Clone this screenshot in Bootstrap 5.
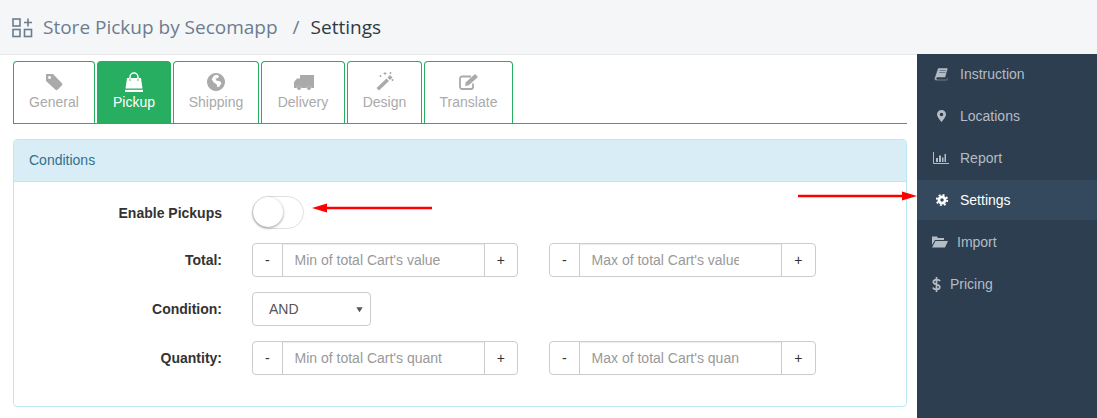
<!DOCTYPE html>
<html lang="en"><head><meta charset="utf-8"><title>Settings</title>
<link href="https://cdn.jsdelivr.net/npm/bootstrap@5.3.0/dist/css/bootstrap.min.css" rel="stylesheet">
<style>
html,body{height:418px;overflow:hidden}
body{font-family:"Liberation Sans",Arial,sans-serif;font-size:14px;color:#333;background:#fff;position:relative}
.topbar{height:55px;background:#f4f6f8;border-bottom:1px solid #e6e8ea;padding-left:12px;font-family:"Open Sans",sans-serif;font-size:19px;color:#6c7d8e}
.topbar svg{flex:none;margin-right:10px}
.crumb-sep{margin-left:15px}
.crumb-now{color:#2f3a45;margin-left:11px}
.shell{height:363px}
.content-area{width:917px;flex:none;padding:6px 10px 0 13px}
.sidebar{width:180px;flex:none;background:#2c3e50;margin-top:-1px;height:364px}
.sidelink{height:42px;color:#b6bcc3;font-size:14px;text-decoration:none;padding-left:16px}
.sidelink:first-child{margin-top:-1px}
.sidelink:hover{color:#b6bcc3}
.sidelink.on,.sidelink.on:hover{background:#34495e;color:#fff;height:40px;margin:1px 0}
.sideico{width:16px;margin-right:11px;flex:none}
.sideico svg{display:block}
.ico-import{margin-left:-1px;margin-right:9px}
.ico-price{margin-left:-1px;width:9px;margin-right:9px}
.tabstrip{border-bottom:1px solid #27ae60;gap:2px;height:63px;align-items:stretch}
.tabitem{border:1px solid #27ae60;border-bottom:0;border-radius:4px 4px 0 0;color:#aaa;padding:7px 0 0;font-size:14px;text-decoration:none;line-height:20px;text-align:center}
.tabitem:hover{color:#aaa}
.tabitem svg{display:block;margin:0 auto -1px}
.tabitem.on,.tabitem.on:hover{background:#27ae60;color:#fff}
.tw-gen{width:82px}.tw-pick{width:74px}.tw-ship{width:86px}.tw-del{width:84px}.tw-des{width:75px}.tw-tra{width:89px}
.condcard{margin-top:15px;height:268px;border-color:#bce8f1;border-radius:4px}
.condhead{height:42px;background:#d9edf7;color:#31708f;border-color:#bce8f1;padding:0 15px;font-size:14px;line-height:41px;border-radius:3px 3px 0 0!important}
.condbody{padding:14px 0 0}
.frow{display:flex;align-items:center;margin-bottom:15px}
.frow-toggle{margin-bottom:14px}
.frow-toggle .flabel{padding-top:1px}
.flabel{width:208px;text-align:right;font-weight:700;margin-right:30px;flex:none;color:#333}
.stepper{flex:none;height:34px;flex-wrap:nowrap;width:266px}
.stepper+.stepper{margin-left:31px;width:267px}
.stepper .btn{width:31px;padding:0;font-size:14px;color:#333;border-color:#ccc;background:#fff;line-height:32px;border-radius:4px 0 0 4px}
.stepper .btn:last-child{width:35px;border-radius:0 4px 4px 0}
.stepper+.stepper .btn:last-child{width:36px}
.stepper .form-control{padding:0 42px 0 12px;font-size:14px;border-color:#ccc;box-shadow:inset 0 1px 1px rgba(0,0,0,.075);text-overflow:clip;width:203px;flex:none;color:#555}
.stepper .form-control::placeholder{color:#999}
.picksel{width:119px;height:34px;padding:0 12px 0 16px;font-size:14px;color:#555;border-color:#ccc;border-radius:4px;background-size:9px 9px;background-position:right 6px center;background-image:url("data:image/svg+xml,%3Csvg xmlns='http://www.w3.org/2000/svg' viewBox='0 0 10 10'%3E%3Cpath d='M1.5 2.500h7L5 8z' fill='%23555'/%3E%3C/svg%3E")}
.toggletrack{width:52px;height:33px;border:1px solid #dfdfdf;border-radius:17px;background:#fff;position:relative}
.toggleknob{position:absolute;left:0;top:0;width:30px;height:30px;background:#fff;border-radius:50%;box-shadow:0 1px 3px rgba(0,0,0,.4)}
.redarrow{position:absolute;display:block}
.arrow-a{left:312px;top:203px}
.arrow-b{left:798px;top:191px}
</style></head><body>
<div class="topbar d-flex align-items-center">
<svg width="21" height="21" viewBox="0 0 21 21" fill="none" stroke="#6c7d8e" stroke-width="1.6"><rect x="1" y="2" width="7" height="7"/><rect x="1" y="12.500" width="7" height="7"/><rect x="12.500" y="12.500" width="7" height="7"/><path d="M16 1.500v8M12 5.500h8"/></svg>
<span>Store Pickup by Secomapp</span><span class="crumb-sep">/</span><span class="crumb-now">Settings</span>
</div>
<div class="shell d-flex">
<div class="content-area">
<div class="tabstrip d-flex">
<a class="tabitem tw-gen" href="#"><svg viewBox="0 0 24 24" width="24" height="24"><path d="M4 5h7l9 9.300a1.500 1.500 0 0 1 0 2l-4.500 4.400a1.500 1.500 0 0 1-2 0L4 12zM7.500 7a1.500 1.500 0 1 0 .01 0z" fill="#aaa" fill-rule="evenodd"/></svg>General</a>
<a class="tabitem tw-pick on" href="#"><svg viewBox="0 0 24 24" width="24" height="24"><path d="M5 9h14l1.500 10.500h-17z" fill="#fff"/><path d="M3 20.800h18V23H3z" fill="#fff"/><path d="M8 12V8a4 4 0 0 1 8 0v4" fill="none" stroke="#fff" stroke-width="1.500"/><path d="M8 9.500V12M16 9.500V12" stroke="#27ae60" stroke-width=".8"/></svg>Pickup</a>
<a class="tabitem tw-ship" href="#"><svg viewBox="0 0 24 24" width="24" height="24"><path d="M12 4a9 9 0 1 0 .01 0zM10 6.500l3-.8 2 1.300-1 2-2.500.8 1 2 3 .2 2 2-2 3.500-2 .8-1-3-3-2-1.800-3z" fill="#aaa" fill-rule="evenodd"/></svg>Shipping</a>
<a class="tabitem tw-del" href="#"><svg viewBox="0 0 24 24" width="24" height="24"><path d="M9 6h14v13h-2.300a3 3 0 0 0-5.400 0H10.700a3 3 0 0 0-5.400 0H3v-6l3-3.500h3z" fill="#aaa"/><circle cx="8" cy="19" r="2" fill="#aaa"/><circle cx="18" cy="19" r="2" fill="#aaa"/></svg>Delivery</a>
<a class="tabitem tw-des" href="#"><svg viewBox="0 0 24 24" width="24" height="24"><path d="M3.500 19l10-9.500 2.500 2.500-10 9.500z" fill="#aaa"/><path d="M14.500 8.500l2.500-2.500 2.500 2.500-2.500 2.500z" fill="#aaa"/><path d="M12 3v3M10.500 4.500h3M17.500 3v2M16.500 4h2M19.500 10v2M18.500 11h2M7.500 6v2M6.500 7h2" stroke="#aaa" stroke-width="1"/></svg>Design</a>
<a class="tabitem tw-tra" href="#"><svg viewBox="0 0 24 24" width="24" height="24"><path d="M16 14.500v3.500a2 2 0 0 1-2 2H5a2 2 0 0 1-2-2V9.500a2 2 0 0 1 2-2h9" fill="none" stroke="#aaa" stroke-width="1.800"/><path d="M8 17l.8-3.800L18 5l3 3-9.200 8.200z" fill="#aaa"/></svg>Translate</a>
</div>
<div class="card condcard">
<div class="card-header condhead">Conditions</div>
<div class="card-body condbody">
<div class="frow frow-toggle"><span class="flabel">Enable Pickups</span><div class="toggletrack"><div class="toggleknob"></div></div></div>
<div class="frow"><span class="flabel">Total:</span>
<div class="input-group stepper"><button class="btn" type="button">-</button><input class="form-control" placeholder="Min of total Cart's value"><button class="btn" type="button">+</button></div>
<div class="input-group stepper"><button class="btn" type="button">-</button><input class="form-control" placeholder="Max of total Cart's value"><button class="btn" type="button">+</button></div></div>
<div class="frow"><span class="flabel">Condition:</span><select class="form-select picksel"><option>AND</option></select></div>
<div class="frow"><span class="flabel">Quantity:</span>
<div class="input-group stepper"><button class="btn" type="button">-</button><input class="form-control" placeholder="Min of total Cart's quantity"><button class="btn" type="button">+</button></div>
<div class="input-group stepper"><button class="btn" type="button">-</button><input class="form-control" placeholder="Max of total Cart's quantity"><button class="btn" type="button">+</button></div></div>
</div></div>
</div>
<nav class="sidebar d-flex flex-column">
<a class="sidelink d-flex align-items-center" href="#"><span class="sideico"><svg width="16" height="14" viewBox="0 0 16 14"><path d="M5 1h10l-2.700 9.500H4.500a1 1 0 0 0 0 2h9.300l.6-1.800.6.400-.8 2.400H3.500A2 2 0 0 1 1.600 11zM6.500 3.500h6.500M6 5.500h6.500" fill="#b6bcc3" stroke="#2c3e50" stroke-width=".5"/></svg></span>Instruction</a>
<a class="sidelink d-flex align-items-center" href="#"><span class="sideico"><svg width="16" height="14" viewBox="0 0 16 14"><path d="M8.500 1A4.500 4.500 0 0 0 4 5.500C4 8 8.500 13 8.500 13S13 8 13 5.500A4.500 4.500 0 0 0 8.500 1zm0 6.300a1.800 1.800 0 1 1 0-3.600 1.800 1.800 0 0 1 0 3.600z" fill="#b6bcc3"/></svg></span>Locations</a>
<a class="sidelink d-flex align-items-center" href="#"><span class="sideico"><svg width="16" height="14" viewBox="0 0 16 14"><path d="M.5 1v11.500H16" fill="none" stroke="#b6bcc3"/><path d="M3 7h2v4H3zM6 4.500h2V11H6zM9 6.500h1.500V11H9zM11.500 3H13v8h-1.500z" fill="#b6bcc3"/></svg></span>Report</a>
<a class="sidelink on d-flex align-items-center" href="#"><span class="sideico"><svg width="16" height="14" viewBox="0 0 16 14" fill="none" stroke="#fff"><circle cx="9" cy="7" r="3.100" stroke-width="2.700"/><circle cx="9" cy="7" r="5.200" stroke-width="1.800" stroke-dasharray="2 2.080"/></svg></span>Settings</a>
<a class="sidelink d-flex align-items-center" href="#"><span class="sideico ico-import"><svg width="16" height="12" viewBox="0 0 16 12"><path d="M0 .5h5l1 1.500h6v2H3L0 9zM3.500 5H16l-3 6.500H0z" fill="#b6bcc3"/></svg></span>Import</a>
<a class="sidelink d-flex align-items-center" href="#"><span class="sideico ico-price"><svg width="9" height="15" viewBox="0 0 9 15"><path d="M8 4.200C7.500 3 6 2.700 4.500 2.700 3 2.700 1.300 3.300 1.300 5c0 3.500 6.500 1.500 6.500 5 0 1.700-1.600 2.400-3.300 2.400S1.400 11.800 1 10.500M4.500 0v15" fill="none" stroke="#b6bcc3" stroke-width="1.700"/></svg></span>Pricing</a>
</nav>
</div>
<svg class="redarrow arrow-a" width="120" height="10" viewBox="0 0 120 10"><path d="M14 5h106" stroke="#f00" stroke-width="2.500"/><path d="M0 5l15-4.500v9z" fill="#f00"/></svg>
<svg class="redarrow arrow-b" width="119" height="10" viewBox="0 0 119 10"><path d="M0 5h105" stroke="#f00" stroke-width="2.500"/><path d="M119 5l-15-4.500v9z" fill="#f00"/></svg>
<script src="https://cdn.jsdelivr.net/npm/bootstrap@5.3.0/dist/js/bootstrap.bundle.min.js"></script>
</body></html>
